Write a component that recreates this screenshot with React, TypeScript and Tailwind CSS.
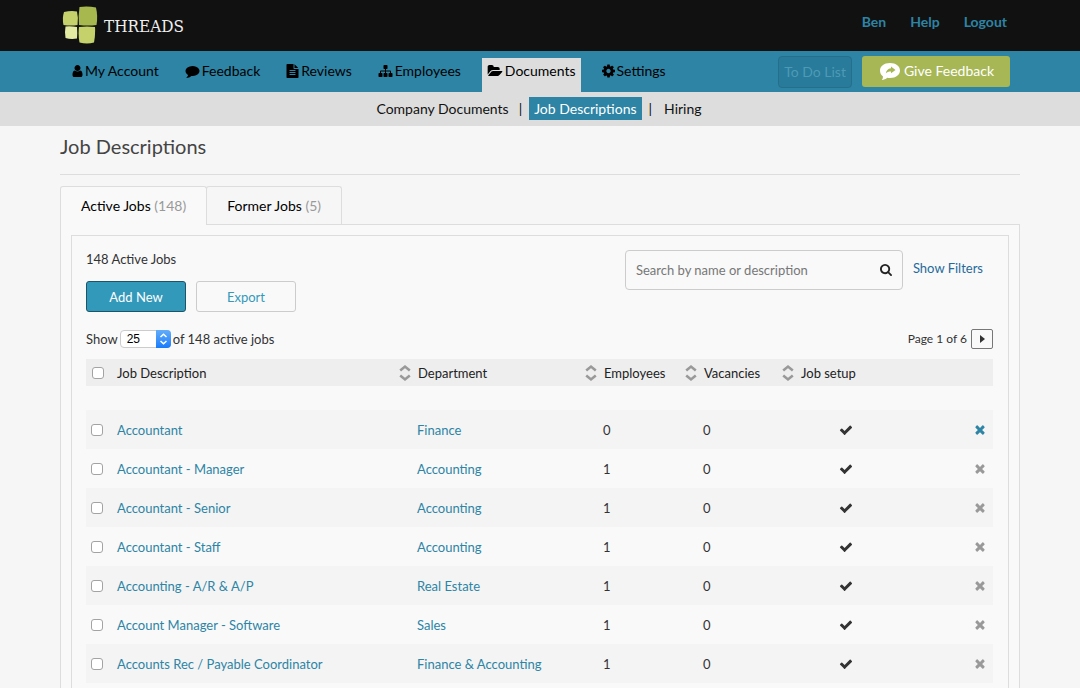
import React, { useState } from "react";

const icons = {
  user: "M1536 1399q0 109-62.5 187t-150.5 78h-854q-88 0-150.5-78t-62.5-187q0-85 8.5-160.5t31.5-152 58.5-131 94-89 134.5-34.5q131 128 313 128t313-128q76 0 134.5 34.5t94 89 58.5 131 31.5 152 8.5 160.5zm-256-887q0 159-112.5 271.5t-271.5 112.5-271.5-112.5-112.5-271.5 112.5-271.5 271.5-112.5 271.5 112.5 112.5 271.5z",
  comment: "M1792 896q0 174-120 321.5t-326 233-450 85.5q-70 0-145-8-198 175-460 242-49 14-114 22-17 2-30.5-9t-17.5-29v-1q-3-4-.5-12t2-10 4.5-9.5l6-9 7-8.5 8-9q7-8 31-34.5t34.5-38 31-39.5 32.5-51 27-59 26-76q-157-89-247.5-220t-90.5-281q0-130 71-248.5t191-204.5 286-136.5 348-50.5q244 0 450 85.5t326 233 120 321.5z",
  file: "M1596 476q14 14 28 36h-472v-472q22 14 36 28zm-476 164h544v1056q0 40-28 68t-68 28h-1344q-40 0-68-28t-28-68v-1600q0-40 28-68t68-28h800v544q0 40 28 68t68 28zm160 736v-64q0-14-9-23t-23-9h-704q-14 0-23 9t-9 23v64q0 14 9 23t23 9h704q14 0 23-9t9-23zm0-256v-64q0-14-9-23t-23-9h-704q-14 0-23 9t-9 23v64q0 14 9 23t23 9h704q14 0 23-9t9-23zm0-256v-64q0-14-9-23t-23-9h-704q-14 0-23 9t-9 23v64q0 14 9 23t23 9h704q14 0 23-9t9-23z",
  sitemap: "M1792 1248v320q0 40-28 68t-68 28h-320q-40 0-68-28t-28-68v-320q0-40 28-68t68-28h96v-192h-512v192h96q40 0 68 28t28 68v320q0 40-28 68t-68 28h-320q-40 0-68-28t-28-68v-320q0-40 28-68t68-28h96v-192h-512v192h96q40 0 68 28t28 68v320q0 40-28 68t-68 28h-320q-40 0-68-28t-28-68v-320q0-40 28-68t68-28h96v-192q0-52 38-90t90-38h512v-192h-96q-40 0-68-28t-28-68v-320q0-40 28-68t68-28h320q40 0 68 28t28 68v320q0 40-28 68t-68 28h-96v192h512q52 0 90 38t38 90v192h96q40 0 68 28t28 68z",
  folder: "M1879 952q0 31-31 66l-336 396q-43 51-120.5 86.5t-143.5 35.5h-1088q-34 0-60.5-13t-26.5-43q0-31 31-66l336-396q43-51 120.5-86.5t143.5-35.5h1088q34 0 60.5 13t26.5 43zm-343-344v160h-832q-94 0-197 47.5t-164 119.5l-337 396-5 6q0-4-.5-12.5t-.5-12.5v-960q0-92 66-158t158-66h320q92 0 158 66t66 158v32h544q92 0 158 66t66 158z",
  cog: "M1152 896q0-106-75-181t-181-75-181 75-75 181 75 181 181 75 181-75 75-181zm512-109v222q0 12-8 23t-20 13l-185 28q-19 54-39 91 35 50 107 138 10 12 10 25t-9 23q-27 37-99 108t-94 71q-12 0-26-9l-138-108q-44 23-91 38-16 136-29 186-7 28-36 28h-222q-14 0-24.5-8.5t-11.5-21.5l-28-184q-49-16-90-37l-141 107q-10 9-25 9-14 0-25-11-126-114-165-168-7-10-7-23 0-12 8-23 15-21 51-66.5t54-70.5q-27-50-41-99l-183-27q-13-2-21-12.5t-8-23.5v-222q0-12 8-23t19-13l186-28q14-46 39-92-40-57-107-138-10-12-10-24 0-10 9-23 26-36 98.5-107.5t94.5-71.5q13 0 26 10l138 107q44-23 91-38 16-136 29-186 7-28 36-28h222q14 0 24.5 8.5t11.5 21.5l28 184q49 16 90 37l142-107q9-9 24-9 13 0 25 10 129 119 165 170 7 8 7 22 0 12-8 23-15 21-51 66.5t-54 70.5q26 50 41 98l183 28q13 2 21 12.5t8 23.5z",
  search: "M1216 832q0-185-131.5-316.5t-316.5-131.5-316.5 131.5-131.5 316.5 131.5 316.5 316.5 131.5 316.5-131.5 131.5-316.5zm512 832q0 52-38 90t-90 38q-54 0-90-38l-343-342q-179 124-399 124-143 0-273.5-55.5t-225-150-150-225-55.5-273.5 55.5-273.5 150-225 225-150 273.5-55.5 273.5 55.5 225 150 150 225 55.5 273.5q0 220-124 399l343 343q37 37 37 90z",
  check: "M1671 566q0 40-28 68l-724 724-136 136q-28 28-68 28t-68-28l-136-136-362-362q-28-28-28-68t28-68l136-136q28-28 68-28t68 28l294 295 656-657q28-28 68-28t68 28l136 136q28 28 28 68z",
  times: "M1490 1322q0 40-28 68l-136 136q-28 28-68 28t-68-28l-294-294-294 294q-28 28-68 28t-68-28l-136-136q-28-28-28-68t28-68l294-294-294-294q-28-28-28-68t28-68l136-136q28-28 68-28t68 28l294 294 294-294q28-28 68-28t68 28l136 136q28 28 28 68t-28 68l-294 294 294 294q28 28 28 68z",
};

type IconName = keyof typeof icons;

function Icon({ name, box = "0 0 1792 1792", className }: { name: IconName; box?: string; className: string }) {
  return (
    <svg viewBox={box} fill="currentColor" className={className} aria-hidden="true">
      <path d={icons[name]} />
    </svg>
  );
}

function SortIcon() {
  return (
    <svg viewBox="0 0 12 18" className="h-[18px] w-3 shrink-0" fill="none" stroke="#999" strokeWidth="2.600" aria-hidden="true">
      <path d="M1.200 6.500 6 2.600 10.800 6.500M1.200 11.500 6 15.400 10.800 11.500" />
    </svg>
  );
}

const nav: { label: string; icon: IconName; box: string; size: string }[] = [
  { label: "My Account", icon: "user", box: "256 0 1280 1792", size: "w-[11px]" },
  { label: "Feedback", icon: "comment", box: "0 0 1792 1792", size: "w-[15px]" },
  { label: "Reviews", icon: "file", box: "128 0 1536 1792", size: "w-[13px]" },
  { label: "Employees", icon: "sitemap", box: "0 0 1792 1792", size: "w-[15px]" },
  { label: "Documents", icon: "folder", box: "0 0 1879 1792", size: "w-4" },
  { label: "Settings", icon: "cog", box: "128 128 1536 1536", size: "w-[13px]" },
];

const jobs = [
  { title: "Accountant", dept: "Finance", employees: 0, vacancies: 0 },
  { title: "Accountant - Manager", dept: "Accounting", employees: 1, vacancies: 0 },
  { title: "Accountant - Senior", dept: "Accounting", employees: 1, vacancies: 0 },
  { title: "Accountant - Staff", dept: "Accounting", employees: 1, vacancies: 0 },
  { title: "Accounting - A/R & A/P", dept: "Real Estate", employees: 1, vacancies: 0 },
  { title: "Account Manager - Software", dept: "Sales", employees: 1, vacancies: 0 },
  { title: "Accounts Rec / Payable Coordinator", dept: "Finance & Accounting", employees: 1, vacancies: 0 },
];

const checkbox = "block size-3 appearance-none rounded-[3px] border border-[#a3a3a3] bg-white checked:bg-[#3399bb]";

function Logo() {
  return (
    <a href="#" className="flex items-center gap-[6px] pl-[2px]">
      <svg viewBox="0 0 36 38" className="mb-[2px] h-[38px] w-9" aria-hidden="true">
        <path d="M2 6Q9 4.500 15 5.500Q16.500 12 15.500 19Q9 20 1.500 19Q0 12 2 6Z" fill="#c5d26b" />
        <path d="M17.500 1Q26 0 34 1.500Q36 10 34.500 19Q26 20 17 19Q16 10 17.500 1Z" fill="#a7b84f" />
        <path d="M3.500 20.500Q9 20 15 21Q15.500 27 15 32.500Q9 33.500 3.500 32Q2.500 26 3.500 20.500Z" fill="#e3eba2" />
        <path d="M17 21Q25 20 33 21Q33.500 29 32 36.500Q25 38.500 17.500 36.500Q16 29 17 21Z" fill="#c5d26b" />
      </svg>
      <span className="font-['DejaVu_Serif_Condensed','DejaVu_Serif',serif] text-[17px] leading-6 text-[#eee]">THREADS</span>
    </a>
  );
}

export default function App() {
  const [search, setSearch] = useState("");
  const [perPage, setPerPage] = useState("25");

  return (
    <div className="min-h-screen bg-[#f6f6f6] font-['Lato',sans-serif] text-[13px] leading-5 text-[#333]">
      <header className="bg-[#111]">
        <div className="mx-auto flex h-[51px] max-w-[960px] items-center justify-between">
          <Logo />
          <div className="flex gap-6 pr-[13px] pb-2 text-[14px] font-bold text-[#2d84a5]">
            <a href="#">Ben</a>
            <a href="#">Help</a>
            <a href="#">Logout</a>
          </div>
        </div>
      </header>

      <nav className="bg-[#2d84a5]">
        <div className="mx-auto flex h-[41px] max-w-[960px] items-end justify-between pr-[10px] pl-[7px]">
          <ul className="flex gap-4 text-[14px] text-black">
            {nav.map((item) => (
              <li key={item.label}>
                <a
                  href="#"
                  className={`flex h-[34px] gap-[2px] px-[5px] pt-[3px] ${item.label === "Documents" ? "bg-[#ddd]" : ""}`}
                >
                  <Icon name={item.icon} box={item.box} className={`mt-[3px] h-[14px] ${item.size}`} />
                  {item.label}
                </a>
              </li>
            ))}
          </ul>
          <div className="flex gap-[10px] self-center text-[14px]">
            <button className="h-8 rounded-[4px] border border-[#256f8b] bg-[#287b9a] px-[5px] text-[#4d9ab6]">To Do List</button>
            <button className="flex h-[31px] items-center gap-[3px] rounded-[3px] bg-[#a7b756] pr-4 pl-[17px] text-white">
              <svg viewBox="0 0 22 19" className="h-[19px] w-[22px]" aria-hidden="true">
                <path d="M11 1C17 1 21 4.200 21 8.500S17 16 11 16C9.800 16 9 15.900 8.200 15.700C6.800 17 5 17.800 2.800 18C3.600 17 4 15.900 4 14.500C2 13 1 11 1 8.500C1 4.200 5 1 11 1Z" fill="#fff" />
                <path d="M12 4.500 16.500 8 12 11.200V9.500C9.800 9.400 8.300 10 6.800 11.500C7.200 8.600 8.800 6.600 12 6.300Z" fill="#a7b756" />
              </svg>
              Give Feedback
            </button>
          </div>
        </div>
      </nav>

      <div className="flex h-[34px] items-center justify-center bg-[#ddd] pb-px text-[14px] text-[#111]">
        <a href="#" className="px-[10px]">Company Documents</a>
        <span>|</span>
        <a href="#" className="mx-[7px] bg-[#2d84a5] px-[5px] py-[2px] leading-[19px] text-white">Job Descriptions</a>
        <span>|</span>
        <a href="#" className="px-3">Hiring</a>
      </div>

      <main className="mx-auto max-w-[960px]">
        <h1 className="border-b border-[#ddd] pt-[6px] pb-[14px] text-[20px] leading-7 text-[#444]">Job Descriptions</h1>

        <div className="mt-[11px] flex text-[14px] text-black" role="tablist">
          <button role="tab" aria-selected="true" className="relative z-10 -mb-px h-[39px] rounded-t-[3px] border border-b-0 border-[#ddd] bg-[#f9f9f9] px-5">
            Active Jobs <span className="text-[#999]">(148)</span>
          </button>
          <button role="tab" aria-selected="false" className="-ml-px h-[38px] rounded-t-[3px] border border-b-0 border-[#ddd] px-5">
            Former Jobs <span className="text-[#999]">(5)</span>
          </button>
        </div>

        <div className="border border-[#ddd] bg-[#f9f9f9] p-[10px]">
          <div className="border border-[#ddd] pt-[14px] pr-[15px] pb-[14px] pl-[14px]">
            <div className="flex justify-between">
              <div>
                <p className="-mt-px">148 Active Jobs</p>
                <div className="mt-3 flex gap-[10px]">
                  <button className="h-[31px] w-[100px] rounded-[3px] border border-[#1f5468] bg-[#3399bb] text-white">Add New</button>
                  <button className="h-[31px] w-[100px] rounded-[3px] border border-[#ccc] text-[#3399bb]">Export</button>
                </div>
              </div>
              <div className="flex items-start gap-[10px] pr-[10px]">
                <div className="flex h-10 w-[278px] items-center rounded-[4px] border border-[#ccc] px-[10px]">
                  <input
                    aria-label="Search jobs"
                    value={search}
                    onChange={(e) => setSearch(e.target.value)}
                    placeholder="Search by name or description"
                    className="min-w-0 flex-1 bg-transparent outline-none placeholder:text-[#777]"
                  />
                  <button aria-label="Search">
                    <Icon name="search" box="64 128 1664 1664" className="size-3 text-[#222]" />
                  </button>
                </div>
                <a href="#" className="mt-2 text-[#266a9b]">Show Filters</a>
              </div>
            </div>

            <div className="mt-[17px] flex items-center justify-between">
              <div className="flex items-center gap-[2px]">
                <label htmlFor="per-page">Show</label>
                <div className="relative">
                  <select
                    id="per-page"
                    value={perPage}
                    onChange={(e) => setPerPage(e.target.value)}
                    className="block h-[18px] w-[51px] appearance-none rounded-[4px] border border-[#ccc] bg-white pl-[6px] font-['Liberation_Sans',sans-serif] text-[12px] leading-4 text-black"
                  >
                    <option>25</option>
                    <option>50</option>
                    <option>100</option>
                  </select>
                  <svg viewBox="0 0 15 18" className="pointer-events-none absolute top-0 right-0 h-[18px] w-[15px] rounded-r-[4px] bg-linear-to-b from-[#62adf9] to-[#157bfb]" fill="none" stroke="#fff" strokeWidth="1.500" aria-hidden="true">
                    <path d="M4.500 7 7.500 4.200 10.500 7M4.500 11 7.500 13.800 10.500 11" />
                  </svg>
                </div>
                <span>of 148 active jobs</span>
              </div>
              <div className="flex items-center gap-1 text-[12px]">
                Page 1 of 6
                <button aria-label="Next page" className="flex h-5 w-[22px] items-center justify-center rounded-[2px] border border-[#777]">
                  <svg viewBox="0 0 5 8" className="h-2 w-[5px]" fill="#333" aria-hidden="true"><path d="M0 0 5 4 0 8z" /></svg>
                </button>
              </div>
            </div>

            <table className="mt-[10px] w-full table-fixed text-left">
              <colgroup>
                <col className="w-[31px]" />
                <col />
                <col className="w-[186px]" />
                <col className="w-[100px]" />
                <col className="w-[97px]" />
                <col className="w-[128px]" />
                <col className="w-[83px]" />
              </colgroup>
              <thead>
                <tr className="h-[27px] bg-[#eee] text-[#222]">
                  <th className="pl-[6px]"><input type="checkbox" aria-label="Select all jobs" className={checkbox} /></th>
                  <th className="font-normal">Job Description</th>
                  {["Department", "Employees", "Vacancies", "Job setup"].map((h) => (
                    <th key={h} className="font-normal">
                      <button className="flex items-center gap-[7px]"><SortIcon />{h}</button>
                    </th>
                  ))}
                  <th />
                </tr>
                <tr className="h-6" aria-hidden="true"><td colSpan={7} /></tr>
              </thead>
              <tbody>
                {jobs.map((job, i) => (
                  <tr key={job.title} className="h-[39px] odd:bg-[#f4f4f4]">
                    <td className="pl-[5px]"><input type="checkbox" aria-label={`Select ${job.title}`} className={checkbox} /></td>
                    <td><a href="#" className="text-[#2d84a5]">{job.title}</a></td>
                    <td className="pl-[18px]"><a href="#" className="text-[#2d84a5]">{job.dept}</a></td>
                    <td className="pl-[18px]">{job.employees}</td>
                    <td className="pl-[18px]">{job.vacancies}</td>
                    <td><Icon name="check" className="mx-auto size-[14px] text-[#333]" /></td>
                    <td className="pr-2">
                      <button aria-label={`Remove ${job.title}`} className={`ml-auto block ${i === 0 ? "text-[#2d84a5]" : "text-[#999]"}`}>
                        <Icon name="times" box="256 320 1280 1280" className="size-[10px]" />
                      </button>
                    </td>
                  </tr>
                ))}
              </tbody>
            </table>
          </div>
        </div>
      </main>
    </div>
  );
}
